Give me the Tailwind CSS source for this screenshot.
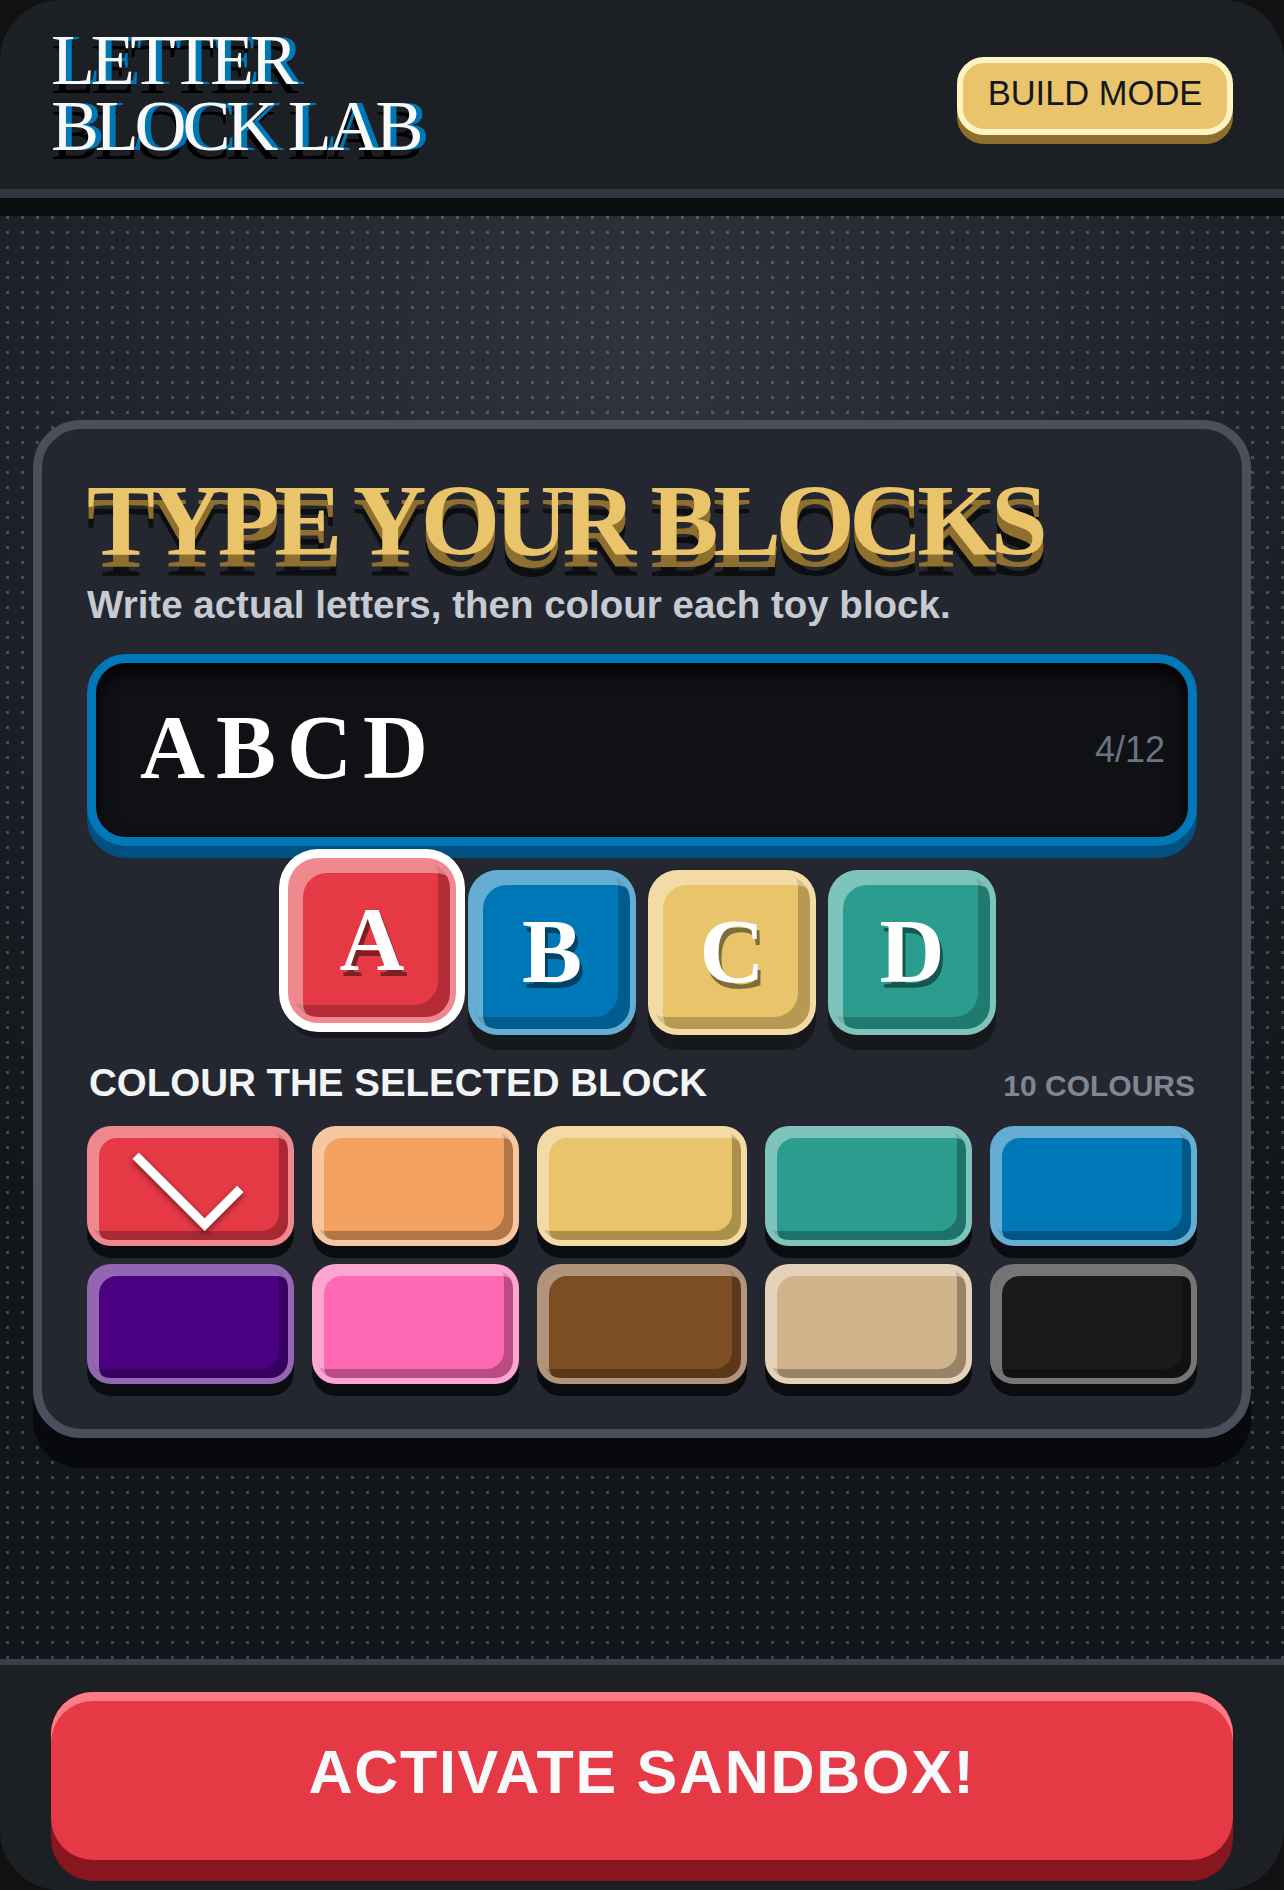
<!DOCTYPE html>
<html lang="en">
<head>
<meta charset="utf-8">
<title>Letter Block Lab</title>
<script src="https://cdn.jsdelivr.net/npm/@tailwindcss/browser@4"></script>
</head>
<body class="bg-[#111111] font-['Liberation_Sans',sans-serif]">
<div class="w-[1284px] h-[1890px] rounded-[63px] bg-[#1e2023]">
<div class="w-[1284px] h-[1890px] rounded-[60px] overflow-hidden flex flex-col">
  <header class="h-[198px] shrink-0 bg-[#1c1f24] border-b-[9px] border-[#333741] flex items-center justify-between px-[51px]">
    <h1 class="font-['Liberation_Serif',serif] font-normal text-[72px] leading-[66px] tracking-[-4.2px] text-[#f8f9fa] mt-[-4px] [text-shadow:6px_0_0_#0077b6,0_9px_0_#000]">LETTER<br>BLOCK LAB</h1>
    <button class="mt-[3px] w-[276px] h-[78px] pb-[5px] rounded-[27px] border-[6px] border-[#fff3c4] bg-[#e9c46a] shadow-[0_9px_0_#8f6f2e] text-[34.5px] text-[#14171c] flex items-center justify-center">BUILD MODE</button>
  </header>
  <div class="h-[18px] shrink-0 bg-[#0a0c0f]"></div>
  <main class="flex-1 px-[33px] pt-[204px] bg-[radial-gradient(circle,rgba(255,255,255,.2)_1.5px,transparent_1.6px),radial-gradient(circle_at_50%_10%,#2f343d,#12151a_72%)] [background-size:15px_15px,auto] [background-position:0_-6px,0_0]">
    <section class="rounded-[48px] border-[9px] border-[#4a505b] bg-[#24272f] shadow-[0_30px_0_#07090c] px-[45px] pt-[41px] pb-[45px]">
      <h2 class="font-['Liberation_Serif',serif] font-bold text-[102px] leading-[102px] tracking-[-5.6px] text-[#e9c46a] [text-shadow:0_12px_0_#8f6f2e,0_21px_0_#0c0e10]">TYPE YOUR BLOCKS</h2>
      <p class="mt-[10px] text-[38.5px] leading-[45px] font-bold text-[#c5cad3]">Write actual letters, then colour each toy block.</p>
      <div class="mt-[27px] h-[192px] rounded-[39px] border-[9px] border-[#0077b6] bg-[#101115] shadow-[0_12px_0_#005080,inset_0_9px_18px_rgba(0,0,0,.9)] flex items-center justify-between pl-[44px] pr-[23px]">
        <span class="font-['Liberation_Serif',serif] font-bold text-[90px] tracking-[11px] text-white pb-[6px]">ABCD</span>
        <span class="text-[36px] text-[#6b7280]">4/12</span>
      </div>
      <div class="mt-[24px] flex justify-center gap-[12px]">
        <div class="relative top-[-12px] w-[168px] h-[165px] pb-[3px] rounded-[30px] border-[6px] border-white/40 bg-[#e63946] shadow-[inset_9px_9px_0_rgba(255,255,255,.4),inset_-12px_-12px_0_rgba(0,0,0,.22),0_0_0_9px_#fff,0_15px_0_#16181c] flex items-center justify-center font-['Liberation_Serif',serif] font-bold text-[90px] text-white [text-shadow:3px_6px_0_rgba(0,0,0,.45)]">A</div>
        <div class="w-[168px] h-[165px] pb-[3px] rounded-[30px] border-[6px] border-white/40 bg-[#0077b6] shadow-[inset_9px_9px_0_rgba(255,255,255,.4),inset_-12px_-12px_0_rgba(0,0,0,.22),0_15px_0_#16181c] flex items-center justify-center font-['Liberation_Serif',serif] font-bold text-[90px] text-white [text-shadow:3px_6px_0_rgba(0,0,0,.45)]">B</div>
        <div class="w-[168px] h-[165px] pb-[3px] rounded-[30px] border-[6px] border-white/40 bg-[#e9c46a] shadow-[inset_9px_9px_0_rgba(255,255,255,.4),inset_-12px_-12px_0_rgba(0,0,0,.22),0_15px_0_#16181c] flex items-center justify-center font-['Liberation_Serif',serif] font-bold text-[90px] text-white [text-shadow:3px_6px_0_rgba(0,0,0,.45)]">C</div>
        <div class="w-[168px] h-[165px] pb-[3px] rounded-[30px] border-[6px] border-white/40 bg-[#2a9d8f] shadow-[inset_9px_9px_0_rgba(255,255,255,.4),inset_-12px_-12px_0_rgba(0,0,0,.22),0_15px_0_#16181c] flex items-center justify-center font-['Liberation_Serif',serif] font-bold text-[90px] text-white [text-shadow:3px_6px_0_rgba(0,0,0,.45)]">D</div>
      </div>
      <div class="mt-[27px] mb-[18px] flex items-baseline justify-between">
        <span class="text-[38.5px] leading-[42px] font-bold text-[#f3f4f6] ml-[2px]">COLOUR THE SELECTED BLOCK</span>
        <span class="text-[30px] font-bold text-[#7f8694] mr-[2px]">10 COLOURS</span>
      </div>
      <div class="grid grid-cols-[207px_207px_210px_207px_207px] auto-rows-[120px] gap-[18px]">
        <div class="relative rounded-[24px] border-[6px] border-white/40 bg-[#e63946] shadow-[inset_6px_6px_0_rgba(255,255,255,.4),inset_-9px_-9px_0_rgba(0,0,0,.27),0_12px_0_#0b0c0f]">
          <span class="absolute left-[44px] top-[16px] w-[102px] h-[55px] rotate-45 border-r-[9px] border-b-[9px] border-white drop-shadow-[2px_2px_3px_rgba(0,0,0,.5)]"></span>
        </div>
        <div class="rounded-[24px] border-[6px] border-white/40 bg-[#f4a261] shadow-[inset_6px_6px_0_rgba(255,255,255,.4),inset_-9px_-9px_0_rgba(0,0,0,.27),0_12px_0_#0b0c0f]"></div>
        <div class="rounded-[24px] border-[6px] border-white/40 bg-[#e9c46a] shadow-[inset_6px_6px_0_rgba(255,255,255,.4),inset_-9px_-9px_0_rgba(0,0,0,.27),0_12px_0_#0b0c0f]"></div>
        <div class="rounded-[24px] border-[6px] border-white/40 bg-[#2a9d8f] shadow-[inset_6px_6px_0_rgba(255,255,255,.4),inset_-9px_-9px_0_rgba(0,0,0,.27),0_12px_0_#0b0c0f]"></div>
        <div class="rounded-[24px] border-[6px] border-white/40 bg-[#0077b6] shadow-[inset_6px_6px_0_rgba(255,255,255,.4),inset_-9px_-9px_0_rgba(0,0,0,.27),0_12px_0_#0b0c0f]"></div>
        <div class="rounded-[24px] border-[6px] border-white/40 bg-[#4b0082] shadow-[inset_6px_6px_0_rgba(255,255,255,.4),inset_-9px_-9px_0_rgba(0,0,0,.27),0_12px_0_#0b0c0f]"></div>
        <div class="rounded-[24px] border-[6px] border-white/40 bg-[#ff69b4] shadow-[inset_6px_6px_0_rgba(255,255,255,.4),inset_-9px_-9px_0_rgba(0,0,0,.27),0_12px_0_#0b0c0f]"></div>
        <div class="rounded-[24px] border-[6px] border-white/40 bg-[#7d4e24] shadow-[inset_6px_6px_0_rgba(255,255,255,.4),inset_-9px_-9px_0_rgba(0,0,0,.27),0_12px_0_#0b0c0f]"></div>
        <div class="rounded-[24px] border-[6px] border-white/40 bg-[#d2b48c] shadow-[inset_6px_6px_0_rgba(255,255,255,.4),inset_-9px_-9px_0_rgba(0,0,0,.27),0_12px_0_#0b0c0f]"></div>
        <div class="rounded-[24px] border-[6px] border-white/40 bg-[#1a1a1a] shadow-[inset_6px_6px_0_rgba(255,255,255,.4),inset_-9px_-9px_0_rgba(0,0,0,.27),0_12px_0_#0b0c0f]"></div>
      </div>
    </section>
  </main>
  <footer class="h-[231px] shrink-0 bg-[#1c1f24] border-t-[6px] border-[#3a4049] px-[51px] pt-[27px]">
    <button class="w-full h-[168px] pb-[7px] rounded-[42px] bg-[#e63946] shadow-[inset_0_9px_0_#ff7b86,0_21px_0_#87161f] text-[61px] font-bold tracking-[1.7px] text-[#f8f9fa]">ACTIVATE SANDBOX!</button>
  </footer>
</div>
</div>
</body>
</html>
